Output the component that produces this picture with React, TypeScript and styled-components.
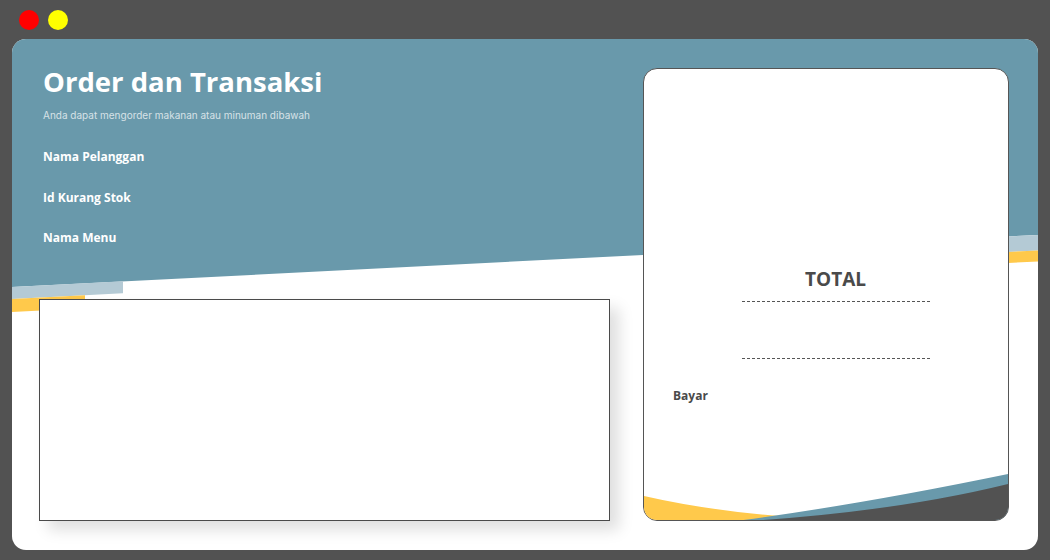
import React from "react";
import styled, { createGlobalStyle } from "styled-components";

const colors = {
  page: "#525252",
  blue: "#6999ab",
  lightBlue: "#b4cad5",
  yellow: "#ffc94b",
  text: "#4a4a4a",
  white: "#ffffff",
};

const GlobalStyle = createGlobalStyle`
  html, body {
    margin: 0;
    padding: 0;
    background: ${colors.page};
  }
  body {
    font-family: "Open Sans", "Noto Sans", sans-serif;
  }
  * {
    box-sizing: border-box;
  }
`;

const Page = styled.div`
  width: 1050px;
  height: 560px;
  padding: 10px 12px;
  display: flex;
  flex-direction: column;
`;

const WindowDots = styled.div`
  display: flex;
  gap: 9px;
  padding-left: 7px;
  height: 20px;
  margin-bottom: 9px;
`;

const Dot = styled.span<{ $color: string }>`
  width: 20px;
  height: 20px;
  border-radius: 50%;
  background: ${(p) => p.$color};
`;

const Card = styled.div`
  position: relative;
  overflow: hidden;
  height: 511px;
  border-radius: 14px;
  background: ${colors.white};
  display: flex;
  gap: 33px;
  padding: 29px 29px 29px 27px;
`;

const Backdrop = styled.svg`
  position: absolute;
  inset: 0;
  width: 100%;
  height: 100%;
  z-index: 0;
`;

const LeftColumn = styled.div`
  position: relative;
  z-index: 1;
  width: 571px;
  display: flex;
  flex-direction: column;
`;

const Header = styled.div`
  padding-left: 4px;
  color: ${colors.white};
`;

const Title = styled.h1`
  margin: -4px 0 0;
  font-size: 27.5px;
  line-height: 36px;
  font-weight: 700;
`;

const Subtitle = styled.p`
  margin: 8px 0 0;
  font-family: "Inter", "Open Sans", sans-serif;
  font-size: 10px;
  line-height: 14px;
  color: #d7e2e7;
`;

const FieldList = styled.div`
  display: flex;
  flex-direction: column;
  gap: 22.5px;
  margin-top: 26px;
`;

const FieldLabel = styled.span`
  font-size: 12px;
  line-height: 18px;
  font-weight: 700;
`;

const TableBox = styled.div`
  margin-top: auto;
  height: 222px;
  background: ${colors.white};
  border: 1px solid #4a4a4a;
  box-shadow: 9px 9px 14px rgba(0, 0, 0, 0.13);
`;

const Receipt = styled.div`
  position: relative;
  z-index: 1;
  overflow: hidden;
  width: 366px;
  border: 1px solid #555555;
  border-radius: 14px;
  background: ${colors.white};
  display: flex;
  flex-direction: column;
  padding: 196px 30px 0 29px;
  color: ${colors.text};
`;

const TotalBlock = styled.div`
  display: flex;
  flex-direction: column;
  align-items: center;
  padding-left: 20px;
`;

const TotalLabel = styled.h2`
  margin: 0;
  font-size: 19px;
  line-height: 28px;
  font-weight: 700;
`;

const DashLine = styled.div<{ $gap: number }>`
  width: 188px;
  border-top: 1px dashed #555555;
  margin-top: ${(p) => p.$gap}px;
`;

const PayLabel = styled.span`
  margin-top: 28px;
  font-size: 12px;
  line-height: 18px;
  font-weight: 700;
`;

const Wave = styled.svg`
  position: absolute;
  left: 0;
  bottom: 0;
  width: 100%;
  height: 60px;
`;

const fieldLabels = ["Nama Pelanggan", "Id Kurang Stok", "Nama Menu"];

// slanted line under the blue header: y = 248 - 0.0507x
const slope = 0.0507;
const edge = (x: number, off = 0) => 248 - slope * x + off;

export default function App() {
  return (
    <>
      <GlobalStyle />
      <Page>
        <WindowDots>
          <Dot $color="#ff0000" />
          <Dot $color="#ffff00" />
        </WindowDots>
        <Card>
          <Backdrop viewBox="0 0 1026 511" preserveAspectRatio="none">
            <polygon
              points={`0,0 1026,0 1026,${edge(1026)} 0,${edge(0)}`}
              fill={colors.blue}
            />
            <polygon
              points={`0,${edge(0)} 111,${edge(111)} 111,${edge(111, 12)} 0,${edge(0, 12)}`}
              fill={colors.lightBlue}
            />
            <polygon
              points={`0,${edge(0, 12)} 73,${edge(73, 12)} 73,${edge(73, 25)} 0,${edge(0, 25)}`}
              fill={colors.yellow}
            />
            <polygon
              points={`700,${edge(700)} 1026,${edge(1026)} 1026,${edge(1026, 15.5)} 700,${edge(700, 15.5)}`}
              fill={colors.lightBlue}
            />
            <polygon
              points={`700,${edge(700, 15.5)} 1026,${edge(1026, 15.5)} 1026,${edge(1026, 26.5)} 700,${edge(700, 26.5)}`}
              fill={colors.yellow}
            />
          </Backdrop>
          <LeftColumn>
            <Header>
              <Title>Order dan Transaksi</Title>
              <Subtitle>Anda dapat mengorder makanan atau minuman dibawah</Subtitle>
              <FieldList>
                {fieldLabels.map((label) => (
                  <FieldLabel key={label}>{label}</FieldLabel>
                ))}
              </FieldList>
            </Header>
            <TableBox />
          </LeftColumn>
          <Receipt>
            <TotalBlock>
              <TotalLabel>TOTAL</TotalLabel>
              <DashLine $gap={8} />
              <DashLine $gap={56} />
            </TotalBlock>
            <PayLabel>Bayar</PayLabel>
            <Wave viewBox="0 0 366 60" preserveAspectRatio="none">
              <path d="M0,36 Q70,52 160,58 L160,60 L0,60 Z" fill={colors.yellow} />
              <path d="M100,60 Q220,44 366,14 L366,60 Z" fill={colors.blue} />
              <path d="M120,60 Q260,50 366,24 L366,60 Z" fill={colors.page} />
            </Wave>
          </Receipt>
        </Card>
      </Page>
    </>
  );
}
